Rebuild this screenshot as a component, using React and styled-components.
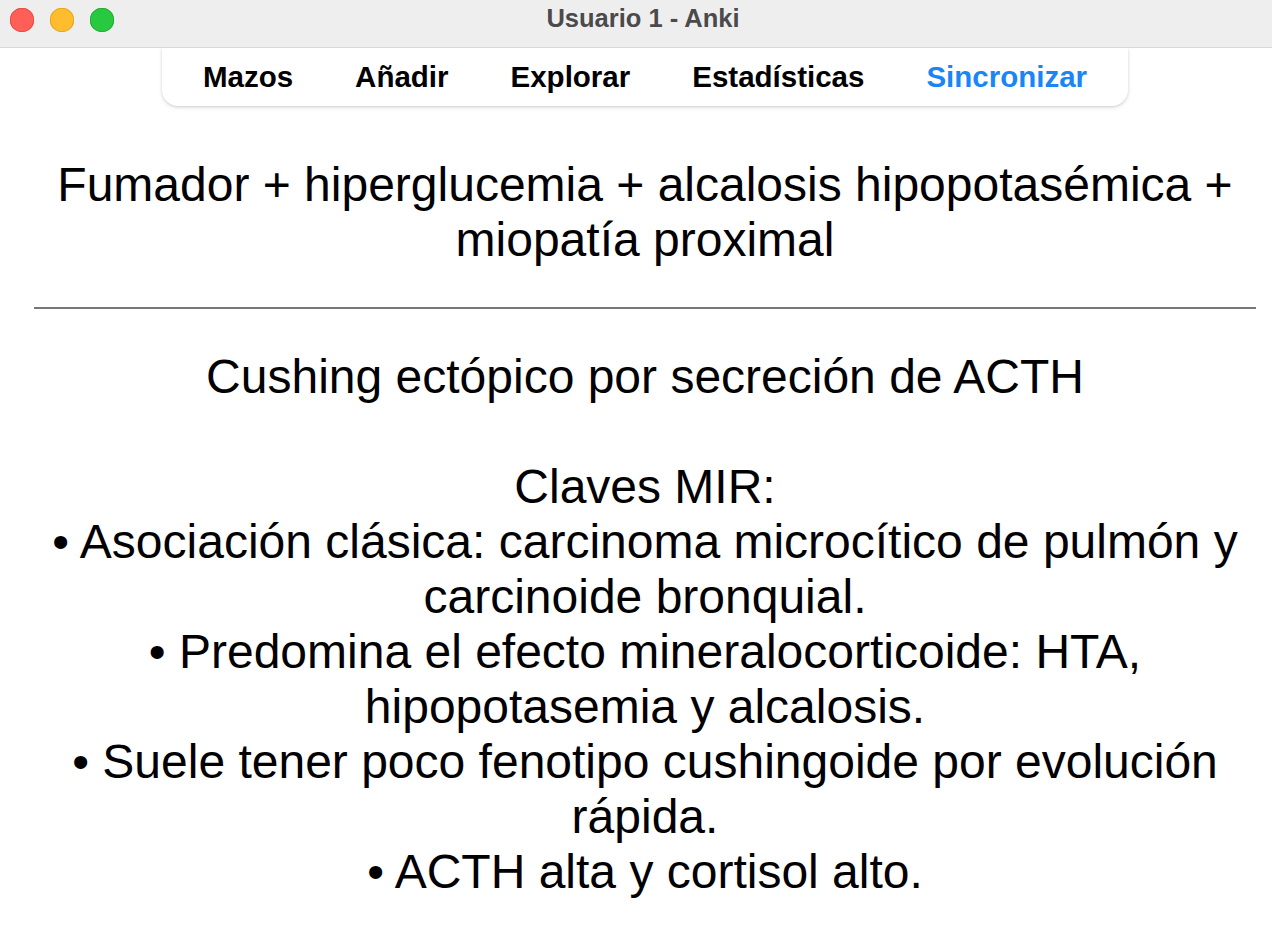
import React from "react";
import styled, { createGlobalStyle } from "styled-components";

const Global = createGlobalStyle`
  html, body { margin: 0; padding: 0; background: #ffffff; }
  body { font-family: "Liberation Sans", Arial, sans-serif; }
`;

const Window = styled.div`
  width: 1272px;
  height: 930px;
  overflow: hidden;
  background: #ffffff;
  display: flex;
  flex-direction: column;
`;

const TitleBar = styled.div`
  height: 47px;
  flex: 0 0 auto;
  background: #efeeef;
  border-bottom: 1px solid #d9d8d9;
  display: flex;
  align-items: center;
  position: relative;
`;

const Lights = styled.div`
  display: flex;
  gap: 16.5px;
  padding-left: 10px;
  margin-top: -7px;
`;

const Light = styled.span`
  width: 23.5px;
  height: 23.5px;
  border-radius: 50%;
  background: ${(p) => p.$c};
  box-shadow: inset 0 0 0 0.8px ${(p) => p.$b};
`;

const Title = styled.div`
  position: absolute;
  left: 0;
  right: 0;
  top: 4px;
  text-align: center;
  font-size: 25.5px;
  font-weight: 700;
  color: #4b4a4b;
  padding-left: 14px;
  pointer-events: none;
`;

const Body = styled.div`
  flex: 1;
  padding: 0 16px 0 34px;
  display: flex;
  flex-direction: column;
  align-items: center;
`;

const Toolbar = styled.nav`
  display: flex;
  align-items: center;
  height: 58px;
  padding: 0 9.5px;
  background: #ffffff;
  border-radius: 0 0 16px 16px;
  box-shadow: 0 1px 3px rgba(0, 0, 0, 0.16), 0 2px 6px rgba(0, 0, 0, 0.05);
`;

const NavItem = styled.span`
  padding: 0 31px;
  font-size: 29.5px;
  font-weight: 700;
  color: ${(p) => (p.$active ? "#1a86f5" : "#000000")};
  line-height: 1;
  margin-top: -1px;
`;

const Card = styled.div`
  align-self: stretch;
  text-align: center;
  font-family: "Liberation Sans", Arial, sans-serif;
  font-size: 48px;
  line-height: 55px;
  color: #000000;
  padding-top: 51px;
`;

const Rule = styled.hr`
  border: none;
  height: 2px;
  background: #777777;
  margin: 40px 0;
`;

const Para = styled.div``;

const items = ["Mazos", "Añadir", "Explorar", "Estadísticas", "Sincronizar"];

export default function App() {
  return (
    <Window>
      <Global />
      <TitleBar>
        <Lights>
          <Light $c="#ff5f57" $b="#e2463f" />
          <Light $c="#febc2e" $b="#e1a116" />
          <Light $c="#28c840" $b="#1aab29" />
        </Lights>
        <Title>Usuario 1 - Anki</Title>
      </TitleBar>
      <Body>
        <Toolbar>
          {items.map((t) => (
            <NavItem key={t} $active={t === "Sincronizar"}>
              {t}
            </NavItem>
          ))}
        </Toolbar>
        <Card>
          <Para>
            Fumador + hiperglucemia + alcalosis hipopotasémica + miopatía proximal
          </Para>
          <Rule />
          <Para>
            Cushing ectópico por secreción de ACTH
            <br />
            <br />
            Claves MIR:
            <br />
            • Asociación clásica: carcinoma microcítico de pulmón y carcinoide bronquial.
            <br />
            • Predomina el efecto mineralocorticoide: HTA, hipopotasemia y alcalosis.
            <br />
            • Suele tener poco fenotipo cushingoide por evolución rápida.
            <br />
            • ACTH alta y cortisol alto.
          </Para>
        </Card>
      </Body>
    </Window>
  );
}
